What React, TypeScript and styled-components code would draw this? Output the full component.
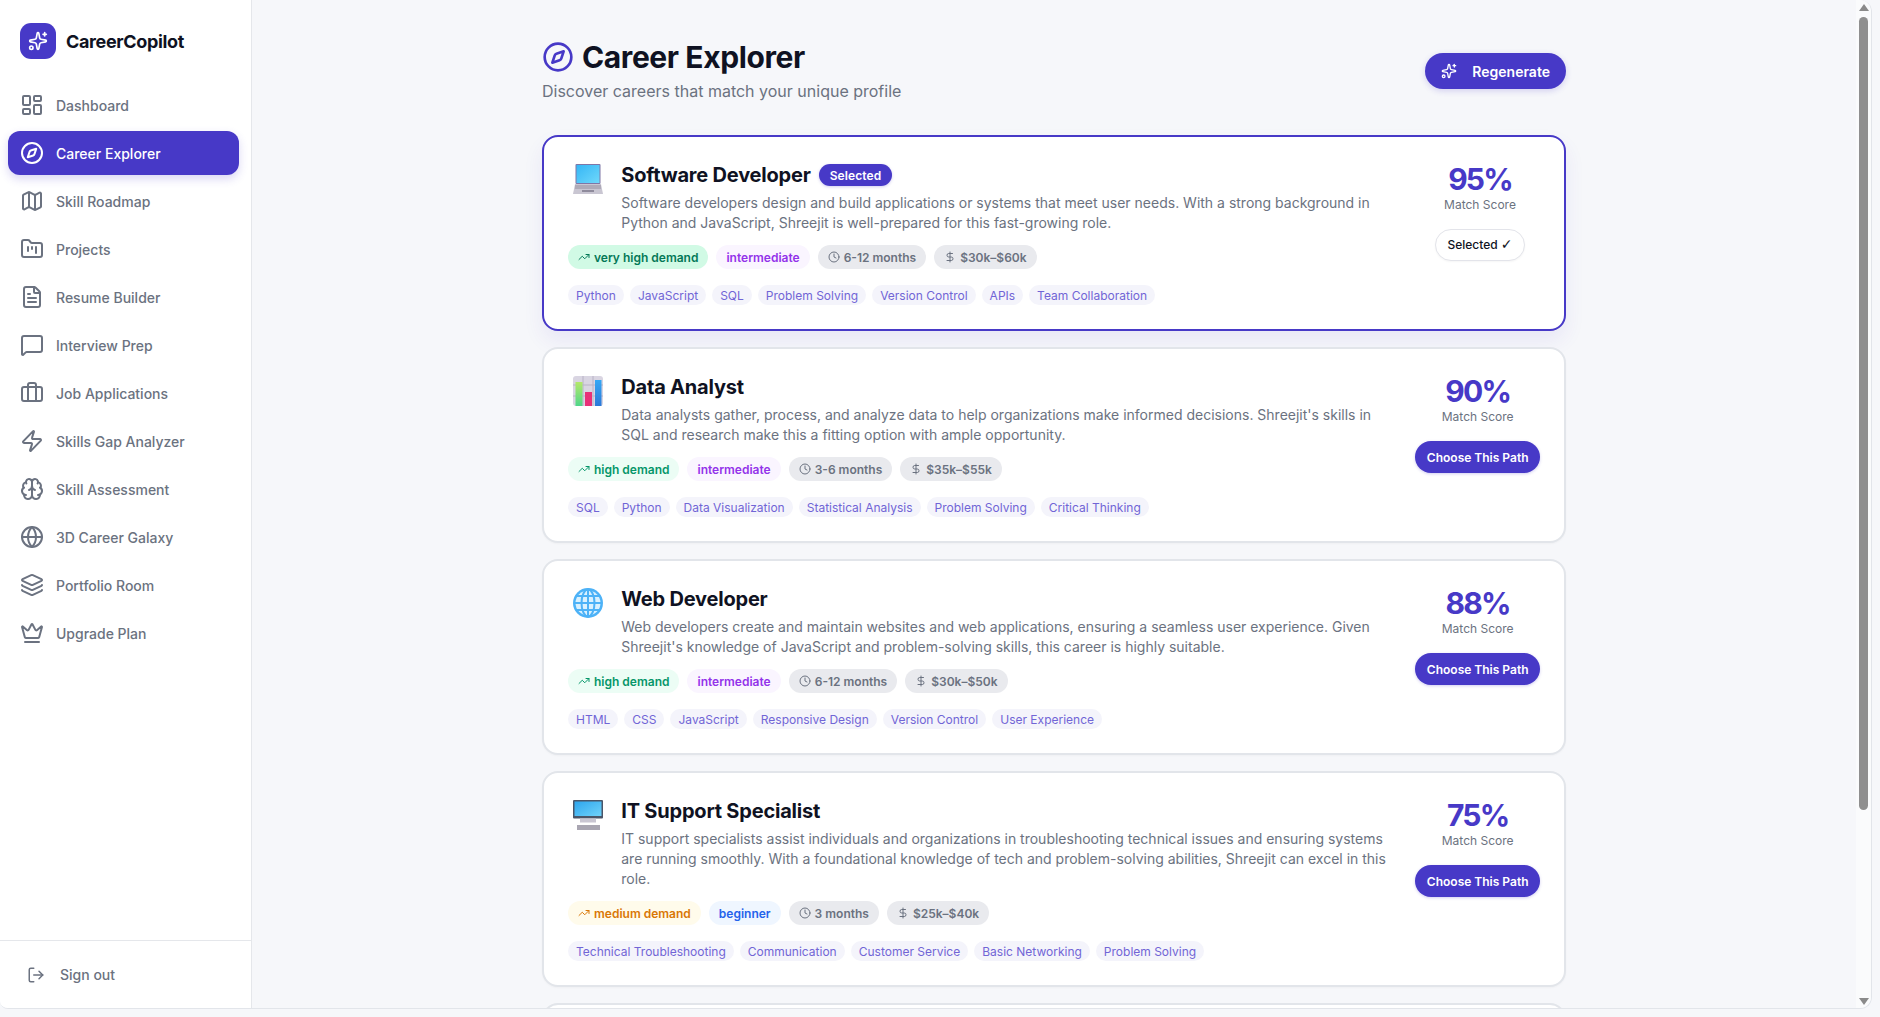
import React from 'react';
import styled, { createGlobalStyle } from 'styled-components';
import {
  Brain, Briefcase, Clock, Compass, Crown, DollarSign, FileText, FolderKanban, Globe, Layers,
  LayoutDashboard, LogOut, Map as MapIcon, MessageSquare, Sparkles, TrendingUp, Zap,
} from 'lucide-react';

const primary = '#4739c7';

const GlobalStyle = createGlobalStyle`
  html, body { margin: 0; padding: 0; height: 100%; overflow: hidden; background: #f6f7fa; }
  body { font-family: Inter, "Liberation Sans", sans-serif; }
  * { box-sizing: border-box; }
`;

const Frame = styled.div`
  display: flex;
  width: 1872px;
  height: 1009px;
  overflow: hidden;
  background: #f6f7fa;
  border-right: 1px solid #e2e5ea;
  border-bottom: 1px solid #e2e5ea;
  border-radius: 0 12px 12px 8px;
`;

const Sidebar = styled.aside`
  display: flex;
  flex-direction: column;
  flex: 0 0 252px;
  background: #fff;
  border-right: 1px solid #e5e7eb;
`;

const Brand = styled.div`
  display: flex;
  align-items: center;
  gap: 10px;
  padding: 23px 20px 24px;
`;

const BrandMark = styled.div`
  display: flex;
  align-items: center;
  justify-content: center;
  width: 36px;
  height: 36px;
  border-radius: 11px;
  background: ${primary};
  color: #fff;
`;

const BrandName = styled.span`
  font-size: 18px;
  font-weight: 700;
  letter-spacing: -0.35px;
  color: #0f1222;
`;

const Nav = styled.nav`
  display: flex;
  flex-direction: column;
  gap: 4px;
  padding: 0 12px 0 8px;
  flex: 1;
`;

const NavItem = styled.div<{ $active?: boolean }>`
  display: flex;
  align-items: center;
  gap: 12px;
  height: 44px;
  padding: 0 12px;
  border-radius: 12px;
  font-size: 14px;
  font-weight: 500;
  color: ${(p) => (p.$active ? '#fff' : '#6b7280')};
  background: ${(p) => (p.$active ? primary : 'transparent')};
  box-shadow: ${(p) => (p.$active ? '0 4px 10px rgba(71, 57, 199, 0.2)' : 'none')};
`;

const SidebarFooter = styled.div`
  display: flex;
  align-items: center;
  gap: 15px;
  height: 68px;
  padding: 0 0 0 27px;
  border-top: 1px solid #e5e7eb;
  font-size: 14px;
  font-weight: 500;
  color: #6b7280;
`;

const Main = styled.main`
  flex: 1;
  min-width: 0;
  overflow: hidden;
  padding: 39px 0 0 290px;
`;

const Content = styled.div`
  width: 1024px;
`;

const Header = styled.header`
  display: flex;
  align-items: center;
  justify-content: space-between;
  margin-bottom: 32px;
`;

const TitleRow = styled.div`
  display: flex;
  align-items: center;
  gap: 8px;
  color: ${primary};
`;

const PageTitle = styled.h1`
  margin: 0;
  font-size: 30px;
  line-height: 36px;
  font-weight: 700;
  letter-spacing: -0.4px;
  color: #0f1222;
`;

const Subtitle = styled.p`
  margin: 4px 0 0;
  font-size: 16px;
  line-height: 24px;
  color: #6b7280;
`;

const RegenerateButton = styled.button`
  display: flex;
  align-items: center;
  gap: 15px;
  height: 36px;
  padding: 0 16px;
  border: 0;
  border-radius: 18px;
  background: ${primary};
  color: #fff;
  font: 600 14px Inter, sans-serif;
  box-shadow: 0 2px 6px rgba(71, 57, 199, 0.2);
`;

const CardList = styled.div`
  display: flex;
  flex-direction: column;
  gap: 16px;
`;

const Card = styled.article<{ $selected?: boolean }>`
  display: flex;
  gap: 24px;
  padding: 24px;
  border: 2px solid ${(p) => (p.$selected ? primary : '#e2e5ea')};
  border-radius: 16px;
  background: #fff;
  box-shadow: ${(p) => (p.$selected ? '0 10px 20px rgba(71, 57, 199, 0.08)' : '0 1px 2px rgba(0, 0, 0, 0.03)')};
`;

const EmptyCard = styled(Card)`
  height: 196px;
`;

const CardBody = styled.div`
  flex: 1;
  min-width: 0;
`;

const CardTop = styled.div`
  display: flex;
  gap: 16px;
`;

const EmojiBox = styled.div`
  flex: 0 0 37.25px;
  display: flex;
  justify-content: center;
  padding: 3px 0 0 3px;
`;

const CardText = styled.div`
  flex: 1;
  min-width: 0;
`;

const CardTitleRow = styled.div`
  display: flex;
  align-items: center;
  gap: 8px;
`;

const CardTitle = styled.h2`
  margin: 0;
  font-size: 20px;
  line-height: 28px;
  font-weight: 700;
  letter-spacing: -0.2px;
  color: #0f1222;
`;

const SelectedBadge = styled.span`
  display: inline-flex;
  align-items: center;
  height: 22px;
  padding: 0 11px;
  border-radius: 11px;
  background: ${primary};
  color: #fff;
  font-size: 12px;
  font-weight: 600;
  letter-spacing: 0.1px;
  box-shadow: 0 1px 3px rgba(71, 57, 199, 0.25);
`;

const Description = styled.p`
  margin: 4px 0 0;
  font-size: 14px;
  line-height: 20px;
  color: #6b7280;
`;

const BadgeRow = styled.div`
  display: flex;
  gap: 8px;
  margin-top: 12px;
`;

const badgeTones = {
  veryHigh: ['#d1fae5', '#047857'],
  high: ['#ecfdf5', '#059669'],
  medium: ['#fffbeb', '#d97706'],
  intermediate: ['#faf5ff', '#9333ea'],
  beginner: ['#eff6ff', '#2563eb'],
  neutral: ['#e9eaee', '#6b7280'],
} as const;

type Tone = keyof typeof badgeTones;

const Badge = styled.span<{ $tone: Tone }>`
  display: inline-flex;
  align-items: center;
  gap: 4px;
  height: 24px;
  padding: 0 10px;
  border-radius: 12px;
  font-size: 12px;
  font-weight: 600;
  background: ${(p) => badgeTones[p.$tone][0]};
  color: ${(p) => badgeTones[p.$tone][1]};
`;

const TagRow = styled.div`
  display: flex;
  gap: 6px;
  margin-top: 16px;
`;

const Tag = styled.span`
  display: inline-flex;
  align-items: center;
  height: 20px;
  padding: 0 8px;
  border-radius: 10px;
  background: #f4f4fb;
  color: #7165d6;
  font-size: 12px;
`;

const ScoreColumn = styled.div`
  display: flex;
  flex-direction: column;
  align-items: center;
  min-width: 120px;
`;

const ScoreValue = styled.div`
  font-size: 30px;
  line-height: 36px;
  font-weight: 700;
  letter-spacing: -1.8px;
  color: ${primary};
`;

const ScoreLabel = styled.div`
  font-size: 12px;
  line-height: 16px;
  color: #6b7280;
`;

const ChooseButton = styled.button`
  height: 32px;
  margin-top: 16px;
  padding: 0 11.5px;
  border: 0;
  border-radius: 16px;
  background: ${primary};
  color: #fff;
  font: 600 12px Inter, sans-serif;
  white-space: nowrap;
  box-shadow: 0 1px 3px rgba(71, 57, 199, 0.25);
`;

const SelectedButton = styled(ChooseButton)`
  border: 1px solid #e3e4ea;
  background: #fff;
  color: #0f1222;
  font-weight: 500;
  line-height: 16px;
  box-shadow: 0 1px 2px rgba(0, 0, 0, 0.04);
`;

const CheckGlyph = styled.span`
  font-family: "DejaVu Sans", sans-serif;
  font-weight: 400;
  font-size: 14px;
  line-height: 14px;
`;

const ScrollTrack = styled.div`
  flex: 0 0 15px;
  display: flex;
  flex-direction: column;
  align-items: center;
  justify-content: space-between;
  padding: 4px 0 3px;
  background: #fafbfc;
`;

const ScrollArrow = styled.div<{ $down?: boolean }>`
  width: 0;
  height: 0;
  border-left: 5px solid transparent;
  border-right: 5px solid transparent;
  ${(p) => (p.$down ? 'border-top: 7px solid #8a8a8a;' : 'border-bottom: 7px solid #8a8a8a;')}
`;

const ScrollThumb = styled.div`
  width: 9px;
  height: 793px;
  margin: 6px 0 auto;
  border-radius: 5px;
  background: #8f8f8f;
`;

const LaptopEmoji = () => (
  <svg width="30" height="30" viewBox="0 0 30 30">
    <defs>
      <linearGradient id="screenA" x1="0" y1="0" x2="1" y2="1">
        <stop offset="0" stopColor="#35b6f5" />
        <stop offset="1" stopColor="#6fd8fb" />
      </linearGradient>
    </defs>
    <rect x="2.5" y="0" width="25" height="20" rx="1" fill="#7f76a6" />
    <rect x="3.5" y="1" width="23" height="18" fill="url(#screenA)" />
    <path d="M2 20h26l2 10H0z" fill="#c9c6d2" />
    <rect x="2" y="21" width="26" height="4" fill="#aeaab8" />
    <rect x="9" y="26" width="12" height="2" fill="#8f8b9c" />
  </svg>
);

const ChartEmoji = () => (
  <svg width="30" height="30" viewBox="0 0 30 30">
    <defs>
      <linearGradient id="barG" x1="0" y1="0" x2="0" y2="1">
        <stop offset="0" stopColor="#b5e86a" />
        <stop offset="1" stopColor="#4fd68a" />
      </linearGradient>
      <linearGradient id="barB" x1="0" y1="0" x2="0" y2="1">
        <stop offset="0" stopColor="#35a8f5" />
        <stop offset="1" stopColor="#2b78d8" />
      </linearGradient>
    </defs>
    <rect width="30" height="30" rx="3" fill="#d9d5e2" />
    <path d="M10 0v30M20 0v30M0 9h30M0 20h30" stroke="#b8b3c6" strokeWidth="1" />
    <rect x="2.5" y="6" width="7" height="24" fill="url(#barG)" />
    <rect x="12" y="16" width="7" height="14" fill="#e83078" />
    <rect x="22" y="4" width="6.5" height="26" fill="url(#barB)" />
  </svg>
);

const GlobeEmoji = () => (
  <svg width="30" height="30" viewBox="0 0 30 30" fill="none">
    <circle cx="15" cy="15" r="15" fill="#4db2f7" />
    <circle cx="15" cy="15" r="12.5" fill="#d9f1ff" />
    <g stroke="#4db2f7" strokeWidth="2">
      <ellipse cx="15" cy="15" rx="6.5" ry="13.5" />
      <path d="M15 1v28M1 15h28M3.5 8h23M3.5 22h23" />
    </g>
  </svg>
);

const DesktopEmoji = () => (
  <svg width="30" height="30" viewBox="0 0 30 30">
    <defs>
      <linearGradient id="screenD" x1="0" y1="0" x2="1" y2="1">
        <stop offset="0" stopColor="#2ea6ee" />
        <stop offset="1" stopColor="#6fd2fa" />
      </linearGradient>
    </defs>
    <rect x="0" y="0" width="30" height="18.5" rx="1" fill="#4a5568" />
    <rect x="1.5" y="1.5" width="27" height="14.5" fill="url(#screenD)" />
    <rect x="7" y="18.5" width="16" height="4" fill="#c9c6d2" />
    <rect x="4" y="25" width="23" height="5" fill="#a9a6b2" />
  </svg>
);

type Career = {
  title: string;
  emoji: React.ReactNode;
  description: string;
  demand: { label: string; tone: Tone };
  level: { label: string; tone: Tone };
  duration: string;
  salary: string;
  tags: string[];
  score: number;
  selected?: boolean;
};

const careers: Career[] = [
  {
    title: 'Software Developer',
    emoji: <LaptopEmoji />,
    description:
      'Software developers design and build applications or systems that meet user needs. With a strong background in Python and JavaScript, Shreejit is well-prepared for this fast-growing role.',
    demand: { label: 'very high demand', tone: 'veryHigh' },
    level: { label: 'intermediate', tone: 'intermediate' },
    duration: '6-12 months',
    salary: '$30k–$60k',
    tags: ['Python', 'JavaScript', 'SQL', 'Problem Solving', 'Version Control', 'APIs', 'Team Collaboration'],
    score: 95,
    selected: true,
  },
  {
    title: 'Data Analyst',
    emoji: <ChartEmoji />,
    description:
      "Data analysts gather, process, and analyze data to help organizations make informed decisions. Shreejit's skills in SQL and research make this a fitting option with ample opportunity.",
    demand: { label: 'high demand', tone: 'high' },
    level: { label: 'intermediate', tone: 'intermediate' },
    duration: '3-6 months',
    salary: '$35k–$55k',
    tags: ['SQL', 'Python', 'Data Visualization', 'Statistical Analysis', 'Problem Solving', 'Critical Thinking'],
    score: 90,
  },
  {
    title: 'Web Developer',
    emoji: <GlobeEmoji />,
    description:
      "Web developers create and maintain websites and web applications, ensuring a seamless user experience. Given Shreejit's knowledge of JavaScript and problem-solving skills, this career is highly suitable.",
    demand: { label: 'high demand', tone: 'high' },
    level: { label: 'intermediate', tone: 'intermediate' },
    duration: '6-12 months',
    salary: '$30k–$50k',
    tags: ['HTML', 'CSS', 'JavaScript', 'Responsive Design', 'Version Control', 'User Experience'],
    score: 88,
  },
  {
    title: 'IT Support Specialist',
    emoji: <DesktopEmoji />,
    description:
      'IT support specialists assist individuals and organizations in troubleshooting technical issues and ensuring systems are running smoothly. With a foundational knowledge of tech and problem-solving abilities, Shreejit can excel in this role.',
    demand: { label: 'medium demand', tone: 'medium' },
    level: { label: 'beginner', tone: 'beginner' },
    duration: '3 months',
    salary: '$25k–$40k',
    tags: ['Technical Troubleshooting', 'Communication', 'Customer Service', 'Basic Networking', 'Problem Solving'],
    score: 75,
  },
];

const navItems = [
  { label: 'Dashboard', icon: LayoutDashboard },
  { label: 'Career Explorer', icon: Compass, active: true },
  { label: 'Skill Roadmap', icon: MapIcon },
  { label: 'Projects', icon: FolderKanban },
  { label: 'Resume Builder', icon: FileText },
  { label: 'Interview Prep', icon: MessageSquare },
  { label: 'Job Applications', icon: Briefcase },
  { label: 'Skills Gap Analyzer', icon: Zap },
  { label: 'Skill Assessment', icon: Brain },
  { label: '3D Career Galaxy', icon: Globe },
  { label: 'Portfolio Room', icon: Layers },
  { label: 'Upgrade Plan', icon: Crown },
];

const CareerCard = ({ career }: { career: Career }) => (
  <Card $selected={career.selected}>
    <CardBody>
      <CardTop>
        <EmojiBox>{career.emoji}</EmojiBox>
        <CardText>
          <CardTitleRow>
            <CardTitle>{career.title}</CardTitle>
            {career.selected && <SelectedBadge>Selected</SelectedBadge>}
          </CardTitleRow>
          <Description>{career.description}</Description>
        </CardText>
      </CardTop>
      <BadgeRow>
        <Badge $tone={career.demand.tone}>
          <TrendingUp size={12} />
          {career.demand.label}
        </Badge>
        <Badge $tone={career.level.tone}>{career.level.label}</Badge>
        <Badge $tone="neutral">
          <Clock size={12} />
          {career.duration}
        </Badge>
        <Badge $tone="neutral">
          <DollarSign size={12} />
          {career.salary}
        </Badge>
      </BadgeRow>
      <TagRow>
        {career.tags.map((tag) => (
          <Tag key={tag}>{tag}</Tag>
        ))}
      </TagRow>
    </CardBody>
    <ScoreColumn>
      <ScoreValue>{career.score}%</ScoreValue>
      <ScoreLabel>Match Score</ScoreLabel>
      {career.selected ? (
        <SelectedButton>
          Selected <CheckGlyph>✓</CheckGlyph>
        </SelectedButton>
      ) : (
        <ChooseButton>Choose This Path</ChooseButton>
      )}
    </ScoreColumn>
  </Card>
);

export default function App() {
  return (
    <>
      <GlobalStyle />
      <Frame>
        <Sidebar>
          <Brand>
            <BrandMark>
              <Sparkles size={20} />
            </BrandMark>
            <BrandName>CareerCopilot</BrandName>
          </Brand>
          <Nav>
            {navItems.map(({ label, icon: Icon, active }) => (
              <NavItem key={label} $active={active}>
                <Icon size={24} strokeWidth={2} />
                {label}
              </NavItem>
            ))}
          </Nav>
          <SidebarFooter>
            <LogOut size={18} />
            Sign out
          </SidebarFooter>
        </Sidebar>
        <Main>
          <Content>
            <Header>
              <div>
                <TitleRow>
                  <Compass size={32} />
                  <PageTitle>Career Explorer</PageTitle>
                </TitleRow>
                <Subtitle>Discover careers that match your unique profile</Subtitle>
              </div>
              <RegenerateButton>
                <Sparkles size={16} />
                Regenerate
              </RegenerateButton>
            </Header>
            <CardList>
              {careers.map((career) => (
                <CareerCard key={career.title} career={career} />
              ))}
              <EmptyCard />
            </CardList>
          </Content>
        </Main>
        <ScrollTrack>
          <ScrollArrow />
          <ScrollThumb />
          <ScrollArrow $down />
        </ScrollTrack>
      </Frame>
    </>
  );
}
